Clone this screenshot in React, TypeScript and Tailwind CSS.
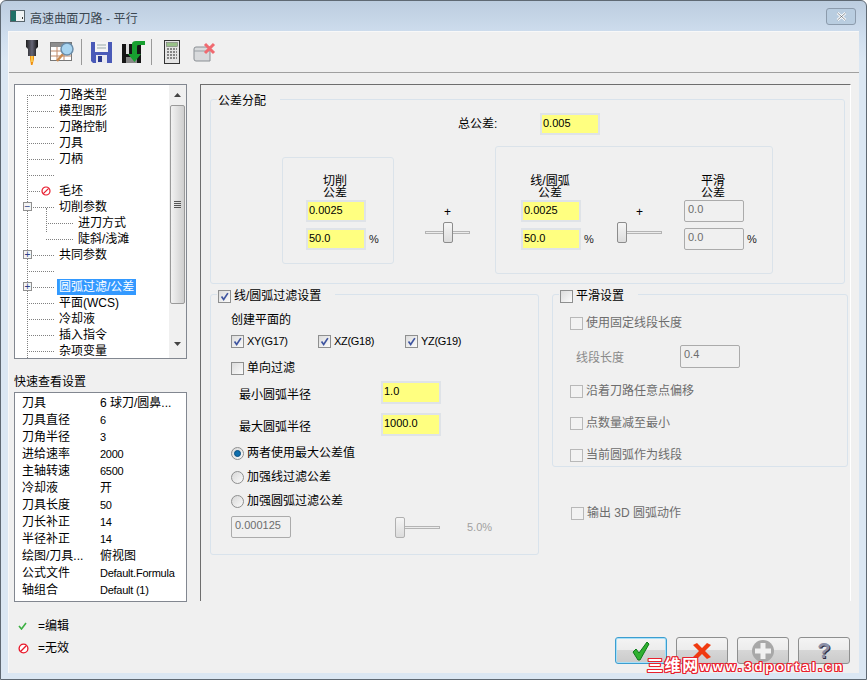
import React from 'react';

const Check = ({ className = '' }: { className?: string }) => (
  <svg viewBox="0 0 13 13" className={className}>
    <path d="M3 6.5 L5.5 10 L10.5 2.5" fill="none" stroke="#3f55a0" strokeWidth="2" />
  </svg>
);

function CheckBox({ checked, disabled, label, small, className = '' }: { checked?: boolean; disabled?: boolean; label?: string; small?: boolean; className?: string }) {
  return (
    <div className={`flex items-center h-[14px] ${className}`}>
      <div className={`relative w-[13px] h-[13px] shrink-0 border ${disabled ? 'border-[#b8b8b8] bg-[#f2f2f2]' : 'border-[#8e8f8f] bg-gradient-to-br from-[#dcdcdc] to-[#fbfbfb]'}`}>
        {checked && <Check className="absolute inset-0 w-[11px] h-[11px]" />}
      </div>
      {label && <span className={`ml-[3px] whitespace-nowrap ${small ? 'text-[11px] tracking-[-0.3px]' : ''} ${disabled ? 'text-[#6d6d6d]' : 'text-black'}`}>{label}</span>}
    </div>
  );
}

function Radio({ on, label, className = '' }: { on?: boolean; label: string; className?: string }) {
  return (
    <div className={`flex items-center h-[14px] ${className}`}>
      <div className="flex items-center justify-center w-[13px] h-[13px] rounded-full border border-[#8e8f8f] bg-gradient-to-br from-[#d8d8d8] to-[#fafafa]">
        {on && <div className="w-[7px] h-[7px] rounded-full bg-[#0f6fae] border border-[#0a4f80]" />}
      </div>
      <span className="ml-[3px] whitespace-nowrap">{label}</span>
    </div>
  );
}

function YellowInput({ value, h = 'h-[22px]', className = '' }: { value: string; h?: string; className?: string }) {
  return (
    <div className={`w-[60px] ${h} shrink-0 border-2 border-[#dfe3e8] bg-[#ffff80] pl-[1px] text-[11px] leading-[16px] text-black ${className}`}>{value}</div>
  );
}

function GrayInput({ value, h = 'h-[22px]', className = '' }: { value: string; h?: string; className?: string }) {
  return (
    <div className={`w-[60px] ${h} shrink-0 border border-[#ababab] rounded-[2px] pl-[3px] text-[11px] leading-[17px] text-[#6d6d6d] ${className}`}>{value}</div>
  );
}

function Slider({ left, plus, dim }: { left: string; plus?: boolean; dim?: boolean }) {
  return (
    <div className="w-[45px] shrink-0">
      {plus && <div className="h-[12px] leading-[14px] text-center mb-[5px] text-black">+</div>}
      <div className="relative h-[21px]">
        <div className="absolute left-0 right-0 top-[9px] h-[3px] border border-[#b4b4b4] bg-[#ececec]" />
        <div className={`absolute top-0 ${left} w-[10px] h-[21px] rounded-[2px] border ${dim ? 'border-[#b0b0b0]' : 'border-[#8c8c8c]'} bg-gradient-to-b from-[#f6f6f6] to-[#dcdcdc]`} />
      </div>
    </div>
  );
}

function ToleranceColumn({ first, second, top, bottom, gray }: { first: string; second: string; top: string; bottom: string; gray?: boolean }) {
  const Input = gray ? GrayInput : YellowInput;
  return (
    <div className="w-[72px] shrink-0">
      <div className="w-[58px] text-center leading-[12px] h-[24px] pt-[3px] whitespace-nowrap text-black">
        {first}
        <br />
        {second}
      </div>
      <div className="mt-[4px]">
        <Input value={top} />
      </div>
      <div className="mt-[6px] flex items-center">
        <Input value={bottom} />
        <span className="ml-[3px] text-[11px] text-[#222]">%</span>
      </div>
    </div>
  );
}

function Group({ legend, className = '', children }: { legend: React.ReactNode; className?: string; children: React.ReactNode }) {
  return (
    <div className={`relative shrink-0 border border-[#d9e3ec] rounded-[3px] ${className}`}>
      <div className="absolute -top-[6px] left-[6px] bg-[#f0f0f0] pr-[14px] leading-[14px] whitespace-nowrap">{legend}</div>
      {children}
    </div>
  );
}

const NoIcon = ({ className = '' }: { className?: string }) => (
  <svg viewBox="0 0 10 10" className={className}>
    <circle cx="5" cy="5" r="4" fill="#fff" stroke="#e8182a" strokeWidth="1.2" />
    <path d="M2.3 7.7 L7.7 2.3" stroke="#e8182a" strokeWidth="1.2" />
  </svg>
);

const treeRows: { t: string; exp?: '+' | '-'; no?: boolean; child?: boolean; sel?: boolean }[] = [
  { t: '刀路类型' },
  { t: '模型图形' },
  { t: '刀路控制' },
  { t: '刀具' },
  { t: '刀柄' },
  { t: '' },
  { t: '毛坯', no: true },
  { t: '切削参数', exp: '-' },
  { t: '进刀方式', child: true },
  { t: '陡斜/浅滩', child: true },
  { t: '共同参数', exp: '+' },
  { t: '' },
  { t: '圆弧过滤/公差', exp: '+', sel: true },
  { t: '平面(WCS)' },
  { t: '冷却液' },
  { t: '插入指令' },
  { t: '杂项变量' },
];

const quickRows = [
  ['刀具', '6 球刀/圆鼻...'],
  ['刀具直径', '6'],
  ['刀角半径', '3'],
  ['进给速率', '2000'],
  ['主轴转速', '6500'],
  ['冷却液', '开'],
  ['刀具长度', '50'],
  ['刀长补正', '14'],
  ['半径补正', '14'],
  ['绘图/刀具...', '俯视图'],
  ['公式文件', 'Default.Formula'],
  ['轴组合', 'Default (1)'],
];

function Tree() {
  return (
    <div className="relative w-[173px] h-[275px] border border-[#828790] bg-white flex overflow-hidden">
      <div className="relative flex-1 pt-[2px]">
        <div className="absolute left-[12px] top-[10px] bottom-0 border-l border-dotted border-[#808080]" />
        <div className="absolute left-[31px] top-[123px] h-[24px] border-l border-dotted border-[#808080]" />
        {treeRows.map((r, i) => (
          <div key={i} className="relative h-[16px] flex items-center">
            <div className={`${r.child ? 'ml-[31px] w-[27px]' : r.no ? 'ml-[12px] w-[13px]' : 'ml-[12px] w-[27px]'} border-t border-dotted border-[#808080] shrink-0`} />
            {r.exp && (
              <div className="absolute left-[8px] top-[3px] w-[9px] h-[9px] border border-[#8f8f8f] bg-[#f4f4f4] flex items-center justify-center text-[#2b3f86] text-[10px] leading-[7px]">
                {r.exp === '+' ? '+' : '−'}
              </div>
            )}
            {r.no && <NoIcon className="w-[10px] h-[10px] ml-[1px] mr-[3px] shrink-0" />}
            {r.sel ? (
              <span className="ml-[3px] px-[2px] h-[16px] leading-[16px] bg-[#3399ff] text-white whitespace-nowrap">{r.t}</span>
            ) : (
              <span className="ml-[5px] whitespace-nowrap">{r.t}</span>
            )}
          </div>
        ))}
      </div>
      <div className="w-[17px] shrink-0 bg-[#f0f0f0] flex flex-col items-center pr-[1px]">
        <svg viewBox="0 0 7 4" className="w-[7px] h-[4px] mt-[8px]">
          <path d="M0 4 L3.5 0 L7 4 Z" fill="#444" />
        </svg>
        <div className="w-[15px] h-[199px] mt-[8px] rounded-[2px] border border-[#9a9a9a] bg-gradient-to-r from-[#f2f2f2] to-[#cfcfcf] flex flex-col items-center justify-center gap-[1px]">
          <div className="w-[7px] h-[1px] bg-[#555]" />
          <div className="w-[7px] h-[1px] bg-[#555]" />
          <div className="w-[7px] h-[1px] bg-[#555]" />
          <div className="w-[7px] h-[1px] bg-[#555]" />
        </div>
        <svg viewBox="0 0 7 4" className="w-[7px] h-[4px] mt-[38px]">
          <path d="M0 0 L3.5 4 L7 0 Z" fill="#444" />
        </svg>
      </div>
    </div>
  );
}

function Toolbar() {
  return (
    <div className="h-[41px] border-b border-[#a0a0a0] flex items-center shrink-0">
      <svg viewBox="0 0 14 27" className="w-[14px] h-[27px] ml-[16px]">
        <defs>
          <linearGradient id="t1" x1="0" x2="1">
            <stop offset="0" stopColor="#222" />
            <stop offset="0.5" stopColor="#667" />
            <stop offset="1" stopColor="#111" />
          </linearGradient>
        </defs>
        <path d="M1 1 H13 V8 L11 10 V17 H3 V10 L1 8 Z" fill="url(#t1)" />
        <path d="M5 17 H9 V20 L7.5 26 H6 L5 20 Z" fill="#f09010" />
        <path d="M6.3 17 H7.7 V23 H6.3 Z" fill="#ffe060" />
      </svg>
      <svg viewBox="0 0 25 22" className="w-[25px] h-[22px] ml-[11px]">
        <rect x="0.5" y="1.5" width="21" height="18" fill="#fff" stroke="#777" />
        <rect x="1" y="2" width="20" height="4" fill="#8d8d8d" />
        <path d="M1 10 H21 M1 15 H21 M7 6 V19 M14 6 V19" stroke="#c08a6a" />
        <path d="M13 13 L7 20" stroke="#c88a50" strokeWidth="2.5" />
        <circle cx="17" cy="8" r="6" fill="#a8d4f0" stroke="#6a8ca8" strokeWidth="1.5" />
      </svg>
      <div className="w-[1px] h-[26px] bg-[#9a9a9a] ml-[6px]" />
      <svg viewBox="0 0 21 22" className="w-[21px] h-[22px] ml-[9px]">
        <path d="M0 1 H21 V22 H2 L0 20 Z" fill="#4a5ab8" />
        <rect x="4" y="1" width="13" height="10" fill="#f4f4f4" />
        <path d="M6 4 H15 M6 7 H15" stroke="#9aa" />
        <rect x="5" y="14" width="11" height="8" fill="#e8e8f0" />
        <rect x="7" y="15" width="4" height="6" fill="#2b3a90" />
      </svg>
      <svg viewBox="0 0 23 24" className="w-[23px] h-[24px] ml-[10px]">
        <rect x="0" y="4" width="19" height="19" fill="#161616" />
        <rect x="4" y="4" width="3" height="10" fill="#ddd" />
        <rect x="4" y="17" width="11" height="6" fill="#888" />
        <path d="M10 14 V4 Q10 1 14 1 H23 V5 H16 Q15 5 15 7 V14 H19 L12.5 22 L6 14 Z" fill="#18a030" />
      </svg>
      <div className="w-[1px] h-[26px] bg-[#9a9a9a] ml-[6px]" />
      <svg viewBox="0 0 16 24" className="w-[16px] h-[24px] ml-[12px]">
        <rect x="0.5" y="0.5" width="15" height="23" fill="#e4e4e4" stroke="#333" />
        <rect x="2.5" y="2.5" width="11" height="4" fill="#98c088" stroke="#666" strokeWidth="0.5" />
        <path d="M3 9 H13 M3 12 H13 M3 15 H13 M3 18 H13" stroke="#666" strokeWidth="1.6" strokeDasharray="2 1" />
      </svg>
      <svg viewBox="0 0 23 20" className="w-[23px] h-[20px] ml-[13px]">
        <path d="M1 7 Q1 5 3 5 H17 V19 H3 Q1 19 1 17 Z" fill="#d8dadc" stroke="#8a8f94" />
        <path d="M1 9 H17" stroke="#9aa0a5" />
        <path d="M12 2 L21 11 M21 2 L12 11" stroke="#f06a70" strokeWidth="3" />
      </svg>
    </div>
  );
}

function ActionButton({ primary, children }: { primary?: boolean; children: React.ReactNode }) {
  return (
    <div className={`w-[52px] h-[27px] rounded-[3px] border flex items-center justify-center bg-[linear-gradient(#f4f4f4_0%,#ececec_48%,#d6d6d6_50%,#cbcbcb_100%)] ${primary ? 'border-[#3c9ed0] shadow-[inset_0_0_0_1px_#a8e0f8]' : 'border-[#8e8f8f]'}`}>
      {children}
    </div>
  );
}

export default function App() {
  return (
    <div className="relative w-[867px] h-[680px] overflow-hidden rounded-t-[6px] border border-[#5f6973] bg-[linear-gradient(#bccddf_0px,#cfdeee_34px,#dbe7f3_60px)] text-[12px] text-black font-['Liberation_Sans','Noto_Sans_CJK_SC',sans-serif]">
      {/* title bar */}
      <div className="h-[30px] flex items-center">
        <svg viewBox="0 0 15 12" className="w-[15px] h-[12px] ml-[9px]">
          <rect x="0.5" y="0.5" width="14" height="11" fill="#eef2f4" stroke="#56646c" />
          <rect x="1" y="1" width="5" height="10" fill="#1f6f66" />
          <rect x="12" y="7" width="1" height="2" fill="#333" />
        </svg>
        <span className="ml-[5px] mt-[5px] text-[#3a4650] tracking-[0.1px]">高速曲面刀路 - 平行</span>
        <div className="ml-auto mr-[10px] mt-[1px] w-[30px] h-[17px] rounded-[3px] border border-[#8c9bac] bg-[#b9cde0] flex items-center justify-center">
          <svg viewBox="0 0 11 9" className="w-[11px] h-[9px]">
            <path d="M1.5 1 L9.5 8 M9.5 1 L1.5 8" stroke="#fff" strokeWidth="2.4" />
            <path d="M1.5 1 L9.5 8 M9.5 1 L1.5 8" stroke="#59636e" strokeWidth="0.7" />
          </svg>
        </div>
      </div>

      {/* client area */}
      <div className="ml-[7px] w-[851px] h-[642px] bg-[#f0f0f0] border-l border-t border-[#f8f8f8] flex flex-col">
        <Toolbar />
        <div className="flex h-[528px] shrink-0">
          {/* left column */}
          <div className="w-[191px] shrink-0 pl-[5px] pt-[11px]">
            <Tree />
            <div className="mt-[13px] h-[20px] leading-[20px] whitespace-nowrap">快速查看设置</div>
            <div className="w-[173px] h-[210px] border border-[#828790] bg-white pt-[2px]">
              {quickRows.map(([k, v]) => (
                <div key={k} className="flex h-[17px] leading-[17px] whitespace-nowrap">
                  <span className="w-[85px] pl-[7px] shrink-0">{k}</span>
                  <span className={/^[\x00-\x7f]+$/.test(v) ? 'text-[11px] tracking-[-0.25px]' : ''}>{v}</span>
                </div>
              ))}
            </div>
          </div>

          {/* right panel */}
          <div className="w-[651px] shrink-0 mt-[11px] border-t border-l border-[#6e6e6e] border-r border-r-[#ffffff] pl-[9px] pt-[14px]">
            <Group legend={<span className="pl-[1px]">公差分配</span>} className="w-[635px] h-[185px]">
              <div className="mt-[13px] flex items-center pl-[247px]">
                <span className="w-[82px]">总公差:</span>
                <YellowInput value="0.005" />
              </div>
              <div className="mt-[11px] flex items-start">
                <div className="ml-[71px] mt-[11px] w-[112px] h-[107px] border border-[#dbe3ea] rounded-[3px] pl-[23px] pt-[14px] shrink-0">
                  <ToleranceColumn first="切削" second="公差" top="0.0025" bottom="50.0" />
                </div>
                <div className="ml-[31px] mt-[59px]">
                  <Slider left="left-[18px]" plus />
                </div>
                <div className="ml-[25px] w-[278px] h-[128px] border border-[#dbe3ea] rounded-[3px] pl-[25px] pt-[25px] flex items-start shrink-0">
                  <ToleranceColumn first="线/圆弧" second="公差" top="0.0025" bottom="50.0" />
                  <div className="ml-[24px] mt-[33px]">
                    <Slider left="left-0" plus />
                  </div>
                  <div className="ml-[22px]">
                    <ToleranceColumn first="平滑" second="公差" top="0.0" bottom="0.0" gray />
                  </div>
                </div>
              </div>
            </Group>

            <div className="mt-[10px] flex items-start gap-[13px]">
              <Group legend={<CheckBox checked label="线/圆弧过滤设置" className="pl-[1px]" />} className="w-[329px] h-[261px]">
                <div className="pl-[20px] pt-[18px]">
                  <div className="h-[14px] leading-[14px]">创建平面的</div>
                  <div className="mt-[7px] flex">
                    <CheckBox checked small label="XY(G17)" className="w-[87px]" />
                    <CheckBox checked small label="XZ(G18)" className="w-[87px]" />
                    <CheckBox checked small label="YZ(G19)" className="w-[87px]" />
                  </div>
                  <CheckBox label="单向过滤" className="mt-[13px]" />
                  <div className="mt-[6px] flex items-center">
                    <span className="pl-[8px] w-[150px] mt-[4px]">最小圆弧半径</span>
                    <YellowInput value="1.0" h="h-[23px]" />
                  </div>
                  <div className="mt-[9px] flex items-center">
                    <span className="pl-[8px] w-[150px] mt-[4px]">最大圆弧半径</span>
                    <YellowInput value="1000.0" h="h-[23px]" />
                  </div>
                  <Radio on label="两者使用最大公差值" className="mt-[10px]" />
                  <Radio label="加强线过滤公差" className="mt-[10px]" />
                  <Radio label="加强圆弧过滤公差" className="mt-[10px]" />
                  <div className="mt-[8px] flex items-center">
                    <GrayInput value="0.000125" />
                    <div className="ml-[104px]">
                      <Slider left="left-0" dim />
                    </div>
                    <span className="ml-[27px] mt-[1px] text-[11px] text-[#a0a0a0]">5.0%</span>
                  </div>
                </div>
              </Group>

              <div className="shrink-0">
                <Group legend={<CheckBox label="平滑设置" className="pl-[1px]" />} className="w-[296px] h-[173px]">
                  <div className="pl-[17px] pt-[21px] text-[#6d6d6d]">
                    <CheckBox disabled label="使用固定线段长度" />
                    <div className="mt-[15px] flex items-center">
                      <span className="pl-[6px] w-[110px] mt-[2px] text-[#8a8a8a]">线段长度</span>
                      <GrayInput value="0.4" h="h-[23px]" />
                    </div>
                    <CheckBox disabled label="沿着刀路任意点偏移" className="mt-[16px]" />
                    <CheckBox disabled label="点数量减至最小" className="mt-[18px]" />
                    <CheckBox disabled label="当前圆弧作为线段" className="mt-[18px]" />
                  </div>
                </Group>
                <CheckBox disabled label="输出 3D 圆弧动作" className="mt-[39px] ml-[19px]" />
              </div>
            </div>
          </div>
        </div>

        {/* footer */}
        <div className="relative flex-1 flex justify-between">
          <div className="pl-[9px] pt-[17px]">
            <div className="flex items-center h-[16px]">
              <svg viewBox="0 0 9 8" className="w-[9px] h-[8px]">
                <path d="M1 4 L3.5 7 L8 1" fill="none" stroke="#3cb043" strokeWidth="1.6" />
              </svg>
              <span className="ml-[11px]">=编辑</span>
            </div>
            <div className="flex items-center h-[16px] mt-[6px]">
              <NoIcon className="w-[11px] h-[11px]" />
              <span className="ml-[9px]">=无效</span>
            </div>
          </div>
          <div className="flex gap-[9px] pr-[9px] pt-[36px]">
            <ActionButton primary>
              <svg viewBox="0 0 20 20" className="w-[20px] h-[20px]">
                <path d="M2 11 L5 8 L8 12 L16 1 L18 3 L9 19 L7 19 Z" fill="#30b030" stroke="#0a7a18" />
              </svg>
            </ActionButton>
            <ActionButton>
              <svg viewBox="0 0 20 18" className="w-[20px] h-[18px]">
                <path d="M1 3 L5 1 L10 6 L15 1 L19 3 L13 9 L19 15 L15 17 L10 12 L5 17 L1 15 L7 9 Z" fill="#f03a10" />
              </svg>
            </ActionButton>
            <ActionButton>
              <svg viewBox="0 0 24 24" className="w-[24px] h-[24px]">
                <circle cx="12" cy="12" r="11" fill="#a8a8a8" />
                <path d="M9.5 4 H14.5 V9.5 H20 V14.5 H14.5 V20 H9.5 V14.5 H4 V9.5 H9.5 Z" fill="#f0f0f0" />
              </svg>
            </ActionButton>
            <ActionButton>
              <span className="text-[22px] leading-[24px] font-bold text-[#8a8fa8] [text-shadow:1px_1px_0_#2c2c40]">?</span>
            </ActionButton>
          </div>
          {/* site watermark sits over the buttons */}
          <div className="absolute left-[638px] top-[58px] h-[14px] leading-[14px] whitespace-nowrap font-bold text-white [text-shadow:1px_0_0_#e8212d,-1px_0_0_#e8212d,0_1px_0_#e8212d,0_-1px_0_#e8212d,1px_1px_0_#e8212d,-1px_-1px_0_#e8212d,1px_-1px_0_#e8212d,-1px_1px_0_#e8212d]">
            <span className="text-[16px] tracking-[1.6px]">三维网</span>
            <span className="text-[13px] tracking-[2.8px]">www.3dportal.cn</span>
          </div>
        </div>
      </div>
    </div>
  );
}
